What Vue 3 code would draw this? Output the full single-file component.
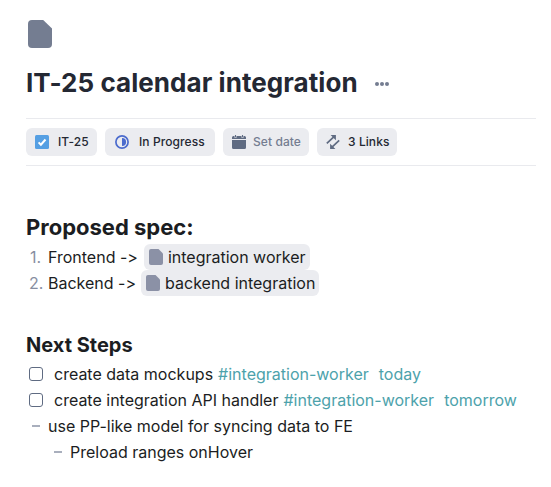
<script setup>
import { ref } from 'vue';

const specs = [
  { label: 'Frontend', link: 'integration worker' },
  { label: 'Backend', link: 'backend integration' }
];

const tasks = ref([
  { text: 'create data mockups', tag: '#integration-worker', due: 'today', done: false },
  { text: 'create integration API handler', tag: '#integration-worker', due: 'tomorrow', done: false }
]);
</script>

<template>
  <main class="note">
    <svg class="note-icon" viewBox="0 0 24 28">
      <path d="M4 0h11.2L24 8.6V24a4 4 0 0 1-4 4H4a4 4 0 0 1-4-4V4a4 4 0 0 1 4-4z" />
    </svg>

    <header class="title-row">
      <h1>IT-25 calendar integration</h1>
      <button type="button" class="btn-more" aria-label="More">
        <svg viewBox="0 0 14 4">
          <circle cx="2" cy="2" r="2" />
          <circle cx="7" cy="2" r="2" />
          <circle cx="12" cy="2" r="2" />
        </svg>
      </button>
    </header>

    <div class="properties">
      <button type="button" class="pill pill-issue">
        <svg viewBox="0 0 14 14">
          <rect width="14" height="14" rx="1.5" fill="#559fe3" />
          <path d="M3.6 7.4l2.3 2.3 4.6-5.2" fill="none" stroke="#fff" stroke-width="2" />
        </svg>
        <span>IT-25</span>
      </button>
      <button type="button" class="pill pill-status">
        <svg viewBox="0 0 14 14">
          <circle cx="7" cy="7" r="6.1" fill="none" stroke="#4b6bcd" stroke-width="1.7" />
          <path d="M7 2.9a4.1 4.1 0 0 1 0 8.2z" fill="#4b6bcd" />
        </svg>
        <span>In Progress</span>
      </button>
      <button type="button" class="pill pill-date">
        <svg viewBox="0 0 14 14">
          <path d="M0 5h14v7.5a1.5 1.5 0 0 1-1.5 1.5h-11A1.5 1.5 0 0 1 0 12.5z" fill="#5f6b82" />
          <path d="M0 4V2.5A1.5 1.5 0 0 1 1.5 1h1v1.7h2V1h5v1.7h2V1h1A1.5 1.5 0 0 1 14 2.5V4z" fill="#5f6b82" />
          <path d="M3.5 0v2.2M10.5 0v2.2" stroke="#5f6b82" stroke-width="1.1" />
        </svg>
        <span>Set date</span>
      </button>
      <button type="button" class="pill pill-links">
        <svg viewBox="0 0 14 14">
          <path d="M.8 8.4L7.8 1.8M13.2 5.4L6 12.2" fill="none" stroke="#5f6b82" stroke-width="1.7" />
          <path d="M4.6 0H9.9V5.3zM4.1 8.7V14H9.4z" fill="#5f6b82" />
        </svg>
        <span>3 Links</span>
      </button>
    </div>

    <h2>Proposed spec:</h2>
    <ol class="specs">
      <li v-for="(spec, index) in specs" :key="spec.link">
        <span class="number">{{ index + 1 }}.</span>
        <span>{{ spec.label }} -&gt;</span>
        <a class="note-link">
          <svg viewBox="0 0 14 16">
            <path d="M2 0h7.5L14 4.6V14a2 2 0 0 1-2 2H2a2 2 0 0 1-2-2V2a2 2 0 0 1 2-2z" />
          </svg>
          <span>{{ spec.link }}</span>
        </a>
      </li>
    </ol>

    <h3>Next Steps</h3>
    <ul class="steps">
      <li v-for="task in tasks" :key="task.text" class="task">
        <input v-model="task.done" type="checkbox" />
        <span>{{ task.text }}</span>
        <span class="tag">{{ task.tag }}</span>
        <span class="due">{{ task.due }}</span>
      </li>
      <li class="bullet">use PP-like model for syncing data to FE</li>
      <li class="bullet nested">Preload ranges onHover</li>
    </ul>
  </main>
</template>

<style>
body {
  background: #fff;
}
</style>

<style scoped>
.note {
  box-sizing: border-box;
  height: 487px;
  padding: 20px 15px 0 26px;
  font-family: Inter, "Liberation Sans", sans-serif;
  font-size: 16px;
  font-feature-settings: "calt" 0;
  line-height: 26px;
  color: #1b1d22;
  white-space: nowrap;
  overflow: hidden;
}

.note svg {
  display: block;
  flex: none;
}

.note-icon {
  width: 24px;
  height: 28px;
  margin-left: 2px;
  fill: #747d91;
}

.title-row {
  display: flex;
  align-items: center;
  height: 70px;
}

h1,
h2,
h3 {
  margin: 0;
  font-weight: 700;
}

h1 {
  width: 349px;
  font-size: 26px;
  line-height: 34px;
  letter-spacing: 0.06px;
  color: #242833;
}

button {
  border: 0;
  font: inherit;
  cursor: pointer;
}

.btn-more {
  padding: 2px 0 0;
  background: none;
}

.btn-more svg {
  width: 14px;
  height: 4px;
  fill: #747d91;
}

.properties {
  display: flex;
  gap: 8px;
  height: 28px;
  padding: 9px 0;
  border-top: 1px solid #e9eaee;
  border-bottom: 1px solid #e9eaee;
}

.pill {
  display: flex;
  align-items: center;
  box-sizing: border-box;
  height: 28px;
  padding: 0 0 0 9px;
  border-radius: 6px;
  background: #ebecf0;
  color: #242833;
  font-size: 12px;
  font-weight: 500;
  letter-spacing: 0.08px;
}

.pill svg {
  width: 14px;
  height: 14px;
}

.pill-issue {
  width: 71px;
  gap: 9px;
}

.pill-status {
  width: 110px;
  padding-left: 10px;
  gap: 10px;
}

.pill-date {
  width: 86px;
  gap: 7px;
  color: #747d91;
}

.pill-links {
  width: 80px;
  gap: 8px;
}

h2 {
  margin-top: 46px;
  font-size: 22px;
  line-height: 30px;
}

h3 {
  margin-top: 35px;
  font-size: 20px;
  line-height: 28px;
}

ol,
ul {
  margin: 0;
  padding: 0;
  list-style: none;
}

li {
  display: flex;
  align-items: center;
  height: 26px;
}

.specs {
  margin-top: 2px;
}

.number {
  width: 18px;
  margin-left: 4px;
  color: #878ea1;
}

.specs li:last-child .number {
  width: 19px;
  margin-left: 3px;
}

.note-link {
  display: flex;
  align-items: center;
  gap: 5px;
  height: 26px;
  margin-left: 6px;
  padding: 0 4px 0 5px;
  border-radius: 6px;
  background: #ebecf0;
}

.specs li:last-child .note-link {
  margin-left: 5px;
}

.note-link svg {
  width: 14px;
  height: 16px;
  fill: #8b91a6;
}

.steps {
  margin-top: 2px;
}

.task input {
  appearance: none;
  box-sizing: border-box;
  width: 14px;
  height: 14px;
  margin: 0 11px 0 3px;
  border: 1px solid #5f6b82;
  border-radius: 3px;
}

.tag,
.due {
  color: #4da2ab;
}

.tag {
  margin-left: 5px;
}

.due {
  margin-left: 10px;
}

.bullet::before {
  content: "";
  width: 8px;
  height: 2px;
  margin: 0 8px 0 6px;
  background: #a9afbd;
}

.nested {
  padding-left: 22px;
}
</style>
